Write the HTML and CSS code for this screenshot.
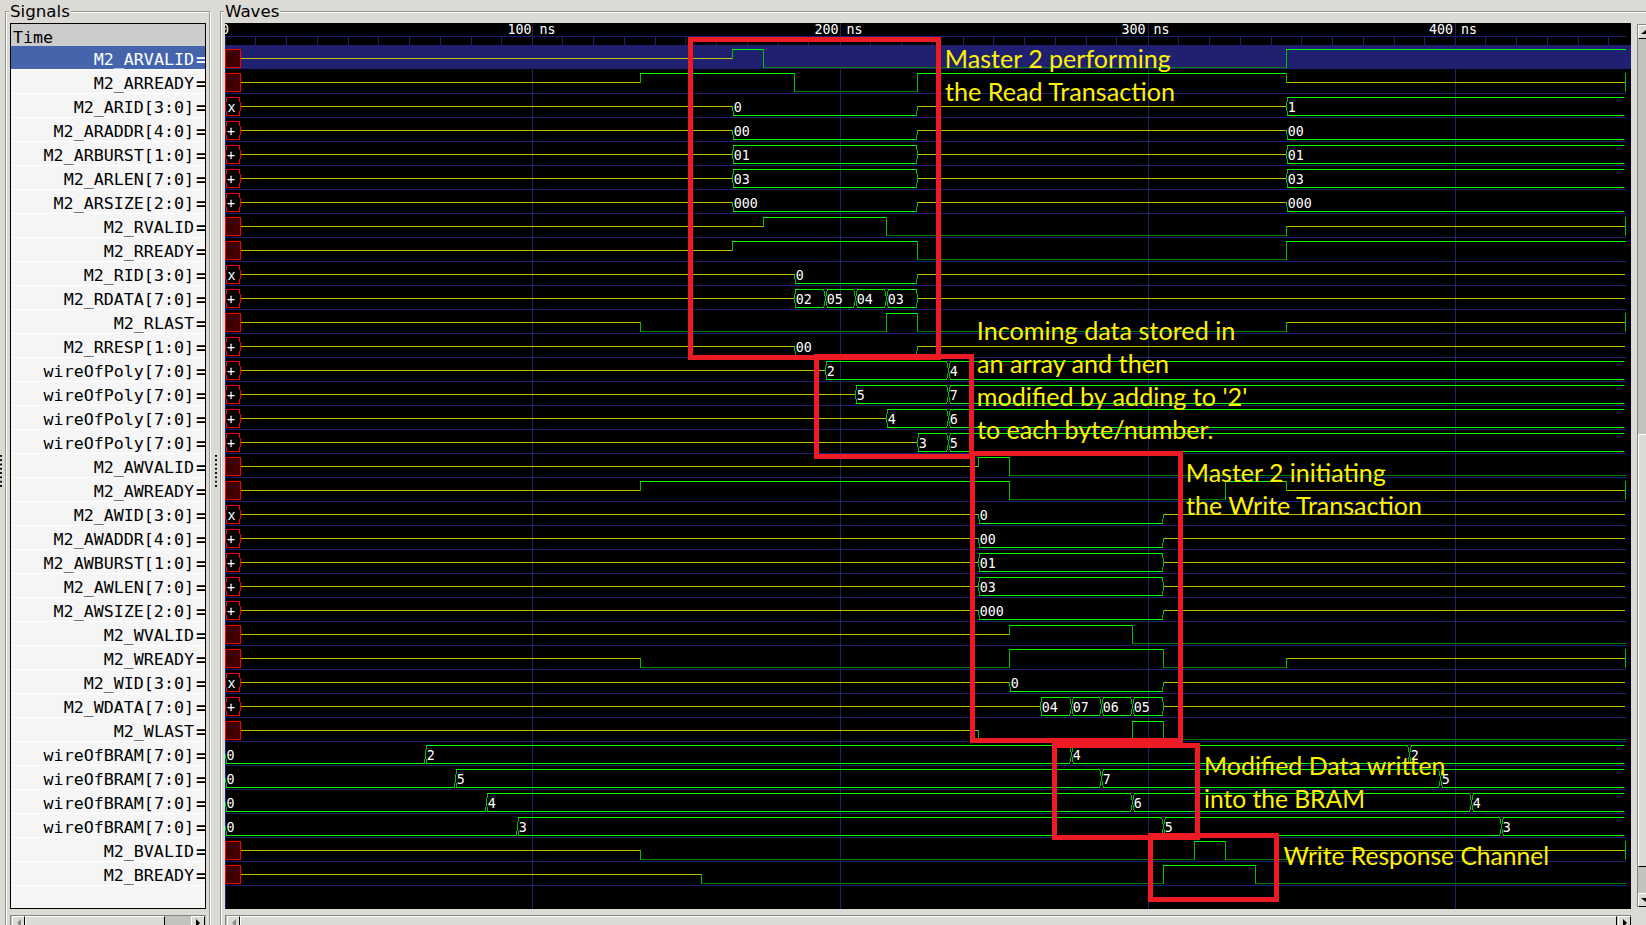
FILE: index.html
```
<!DOCTYPE html>
<html lang="en">
<head>
<meta charset="utf-8">
<title>Waveform viewer</title>
<link rel="stylesheet" href="styles.css">
</head>
<body>
<main class="viewer">
  <div class="grip"></div>
  <section class="pane signals">
    <h2 class="pane-title">Signals</h2>
    <div class="names">
      <div class="time">Time</div>
      <div id="names"></div>
    </div>
    <div class="hscroll">
      <span class="btn"><svg viewBox="0 0 12 12"><path d="M8 2v8L4 6z" fill="#8a8883"/></svg></span>
      <span class="thumb"></span>
      <span class="trough"></span>
      <span class="btn"><svg viewBox="0 0 12 12"><path d="M4 2v8l4-4z"/></svg></span>
    </div>
  </section>
  <div class="grip grip-mid"></div>
  <section class="pane waves">
    <h2 class="pane-title">Waves</h2>
    <div class="wave-row">
      <div class="wave-col">
        <svg id="waves" class="canvas" width="1406" height="886" viewBox="225 23 1406 886"></svg>
        <div class="hscroll">
          <span class="btn"><svg viewBox="0 0 12 12"><path d="M8 2v8L4 6z" fill="#8a8883"/></svg></span>
          <span class="thumb"></span>
          <span class="btn"><svg viewBox="0 0 12 12"><path d="M4 2v8l4-4z"/></svg></span>
        </div>
      </div>
      <div class="vscroll">
        <span class="vbtn"><svg viewBox="0 0 14 12"><path d="M2 8h10L7 4z"/></svg></span>
        <span class="vtrough"></span>
        <span class="vthumb"></span>
        <span class="vtrough-end"></span>
        <span class="vbtn"><svg viewBox="0 0 14 12"><path d="M2 4h10L7 8z"/></svg></span>
      </div>
    </div>
  </section>
</main>
<script src="app.js"></script>
</body>
</html>
```
FILE: styles.css
```
* { box-sizing: border-box; }
body {
  margin: 0;
  background: #dcdad5;
  color: #000;
  font-family: "DejaVu Sans", sans-serif;
  overflow: hidden;
}
.viewer {
  display: flex;
  height: 925px;
  padding-top: 11px;
  overflow: hidden;
}
.grip {
  width: 5px;
  flex: none;
  height: 34px;
  margin-top: 444px;
  background: radial-gradient(circle at 1px 1px, #000 1px, transparent 1.2px) 0 0 / 5px 4.3px;
}
.grip-mid {
  width: 10px;
  background: radial-gradient(circle at 6px 1px, #000 1px, transparent 1.2px) 0 0 / 10px 4.3px;
}
.pane {
  position: relative;
  flex: none;
  height: 940px;
  padding: 11px 4px 0;
  border: 1px solid #9a988f;
  box-shadow: 1px 1px #fff, inset 1px 1px #fff;
}
.signals { width: 205px; }
.waves { width: 1460px; }
.pane-title {
  position: absolute;
  left: 3px;
  top: -11px;
  margin: 0;
  padding: 0 1px;
  background: #dcdad5;
  font-size: 16.67px;
  font-weight: 400;
  line-height: 22px;
}
.names {
  width: 196px;
  height: 886px;
  border: 1px solid #000;
  background: #f5f5f5;
  overflow: hidden;
  font-family: "DejaVu Sans Mono", monospace;
  font-size: 16.67px;
}
.time {
  height: 22px;
  padding-left: 2px;
  background: #cbcbcb;
  line-height: 28px;
}
.name {
  display: flex;
  justify-content: flex-end;
  gap: 2px;
  height: 24px;
  margin-right: -1px;
  border-bottom: 1px solid #fff;
  line-height: 27px;
  white-space: pre;
}
.name b { width: 10px; line-height: 28px; }
.name.selected { background: #4464ac; color: #fff; }
.hscroll {
  display: flex;
  width: 196px;
  height: 16px;
  margin-top: 6px;
  padding-left: 1px;
  border-top: 1px solid #86847f;
  border-left: 1px solid #86847f;
  background: #c4c2bd;
}
.waves .hscroll { width: 1406px; }
.btn, .thumb {
  border-top: 1px solid #fff;
  border-left: 1px solid #fff;
  border-right: 1px solid #000;
  background: #dcdad5;
}
.btn { width: 13px; height: 15px; flex: none; }
.btn svg { display: block; width: 12px; height: 12px; }
.signals .thumb { width: 140px; }
.signals .trough { width: 26px; }
.signals .btn:last-child { width: 14px; }
.waves .thumb { flex: 1; margin-right: 1px; }
.wave-row { display: flex; gap: 6px; }
.wave-col { width: 1406px; flex: none; }
.canvas { display: block; background: #000; }
.vscroll {
  display: flex;
  flex-direction: column;
  width: 18px;
  height: 883px;
  margin-top: 1px;
  border-top: 1px solid #86847f;
  border-left: 1px solid #86847f;
  background: #c4c2bd;
}
.vbtn, .vthumb {
  flex: none;
  border-top: 1px solid #fff;
  border-left: 1px solid #fff;
  border-bottom: 1px solid #000;
  background: #dcdad5;
}
.vbtn { height: 14px; }
.vbtn svg { display: block; width: 14px; height: 12px; }
.vtrough { height: 395px; }
.vthumb { height: 433px; }
.vtrough-end { flex: 1; }
.canvas text { white-space: pre; }
.value {
  fill: #fff;
  font-family: "DejaVu Sans Mono", monospace;
  font-size: 13.33px;
}
.note {
  fill: #fff200;
  font-family: Lato, "Open Sans", sans-serif;
  font-size: 24.6px;
}
.frame { fill: none; stroke: #ed1c24; stroke-width: 5; shape-rendering: crispEdges; }
```
FILE: app.js
```
// Each signal: name, kind (bit / bus / ram), then [x, state] changes.
// Bit states: z, h, l. Bus states: z or the value text.
const ar = (v) => [[732, v], [917, 'z'], [1286, v]];
const aw = (v) => [[978, v], [1163, 'z']];
const signals = [
  ['M2_ARVALID', 'bit', [[732, 'h'], [763, 'l'], [1286, 'h']]],
  ['M2_ARREADY', 'bit', [[640, 'h'], [794, 'l'], [917, 'h'], [1286, 'z']]],
  ['M2_ARID[3:0]', 'x', [[732, '0'], [917, 'z'], [1286, '1']]],
  ['M2_ARADDR[4:0]', '+', ar('00')],
  ['M2_ARBURST[1:0]', '+', ar('01')],
  ['M2_ARLEN[7:0]', '+', ar('03')],
  ['M2_ARSIZE[2:0]', '+', ar('000')],
  ['M2_RVALID', 'bit', [[763, 'h'], [886, 'l'], [1286, 'z']]],
  ['M2_RREADY', 'bit', [[732, 'h'], [917, 'l'], [1286, 'h']]],
  ['M2_RID[3:0]', 'x', [[794, '0'], [917, 'z']]],
  ['M2_RDATA[7:0]', '+', [[794, '02'], [825, '05'], [855, '04'], [886, '03'], [917, 'z']]],
  ['M2_RLAST', 'bit', [[640, 'l'], [886, 'h'], [917, 'l'], [1286, 'z']]],
  ['M2_RRESP[1:0]', '+', [[794, '00'], [917, 'z']]],
  ['wireOfPoly[7:0]', '+', [[825, '2'], [948, '4']]],
  ['wireOfPoly[7:0]', '+', [[855, '5'], [948, '7']]],
  ['wireOfPoly[7:0]', '+', [[886, '4'], [948, '6']]],
  ['wireOfPoly[7:0]', '+', [[917, '3'], [948, '5']]],
  ['M2_AWVALID', 'bit', [[978, 'h'], [1009, 'l']]],
  ['M2_AWREADY', 'bit', [[640, 'h'], [1009, 'l'], [1225, 'h'], [1286, 'z']]],
  ['M2_AWID[3:0]', 'x', aw('0')],
  ['M2_AWADDR[4:0]', '+', aw('00')],
  ['M2_AWBURST[1:0]', '+', aw('01')],
  ['M2_AWLEN[7:0]', '+', aw('03')],
  ['M2_AWSIZE[2:0]', '+', aw('000')],
  ['M2_WVALID', 'bit', [[1009, 'h'], [1132, 'l']]],
  ['M2_WREADY', 'bit', [[640, 'l'], [1009, 'h'], [1163, 'l'], [1286, 'z']]],
  ['M2_WID[3:0]', 'x', [[1009, '0'], [1163, 'z']]],
  ['M2_WDATA[7:0]', '+', [[1040, '04'], [1071, '07'], [1101, '06'], [1132, '05'], [1163, 'z']]],
  ['M2_WLAST', 'bit', [[978, 'l'], [1132, 'h'], [1163, 'l']]],
  ['wireOfBRAM[7:0]', 'ram', [[425, '2'], [1071, '4'], [1409, '2']]],
  ['wireOfBRAM[7:0]', 'ram', [[455, '5'], [1101, '7'], [1440, '5']]],
  ['wireOfBRAM[7:0]', 'ram', [[486, '4'], [1132, '6'], [1471, '4']]],
  ['wireOfBRAM[7:0]', 'ram', [[517, '3'], [1163, '5'], [1501, '3']]],
  ['M2_BVALID', 'bit', [[640, 'l'], [1194, 'h'], [1225, 'l'], [1286, 'z']]],
  ['M2_BREADY', 'bit', [[701, 'l'], [1163, 'h'], [1255, 'l']]]
];

const BLUE = '#202070', HIGH = '#00ff00', EDGE = '#00c000', LOW = '#008000', MID = '#c0c000', RED = '#ff0000';
const out = [];
const rect = (x, y, w, h, c) => out.push(`<rect x="${x}" y="${y}" width="${w}" height="${h}" fill="${c}" shape-rendering="crispEdges"/>`);
const hline = (x0, x1, y, c) => rect(x0, y, x1 - x0, 1, c);
const vline = (x, y0, y1, c) => rect(x, y0, 1, y1 - y0 + 1, c);
const text = (x, y, s) => out.push(`<text class="value" x="${x}" y="${y}">${s}</text>`);

// Time ruler and grid
rect(225, 45, 1406, 24, BLUE);
hline(225, 1626, 36, BLUE);
vline(225, 36, 908, BLUE);
[255, 286, 317, 348, 378, 409, 440, 471, 501, 562, 593, 624, 655, 685, 716, 747, 778, 808,
 870, 901, 932, 963, 993, 1024, 1055, 1086, 1116, 1178, 1209, 1240, 1271, 1301, 1332, 1363,
 1394, 1424, 1485, 1516, 1547, 1578, 1608].forEach((x) => vline(x, 37, 44, BLUE));
[532, 840, 1148, 1455].forEach((x) => vline(x, 23, 908, BLUE));
text(221, 34, '0');
text(507.5, 34, '100 ns');
text(814.5, 34, '200 ns');
text(1121.5, 34, '300 ns');
text(1429, 34, '400 ns');

const isZero = (s) => /^0+$/.test(s);

// Slanted end of a bus segment; dir -1 closes a segment, 1 opens one.
function slant(x, y, dir, zero, wide, color) {
  if (wide) {
    if (!zero) { vline(x + 2 * dir, y, y + 1, color); vline(x + dir, y + 2, y + 6, color); vline(x, y + 7, y + 9, color); }
    vline(x, y + 9, y + 11, color); vline(x + dir, y + 12, y + 16, color); vline(x + 2 * dir, y + 17, y + 18, color);
  } else {
    if (!zero) { vline(x + dir, y, y + 4, color); vline(x, y + 5, y + 9, color); }
    vline(x, y + 9, y + 13, color); vline(x + dir, y + 14, y + 18, color);
  }
}

signals.forEach(([name, kind, changes], i) => {
  const y = 49 + 24 * i;
  if (i > 0) hline(225, 1626, y + 20, BLUE);
  if (kind === 'bit') {
    rect(225, y, 16, 19, RED);
    rect(226, y + 1, 14, 17, '#400000');
    const level = { h: y, z: y + 9, l: y + 18 };
    const color = { h: HIGH, z: MID, l: LOW };
    let x = 241, s = 'z';
    changes.forEach(([nx, ns]) => {
      hline(x, nx, level[s], color[s]);
      vline(nx, Math.min(level[s], level[ns]), Math.max(level[s], level[ns]), EDGE);
      x = nx + (ns === 'h' ? 0 : 1);
      s = ns;
    });
    hline(x, 1626, level[s], color[s]);
    if (s === 'z') vline(1625, y, y + 18, EDGE);
    return;
  }
  let x = 241, s = 'z';
  if (kind === 'ram') {
    x = 225; s = '0';
    slant(225, y, 1, true, false, EDGE);
    text(226.5, y + 15, '0');
  } else {
    hline(226, 240, y, RED);
    hline(226, 240, y + 18, RED);
    slant(225, y, 1, false, false, RED);
    slant(240, y, -1, false, false, RED);
    text(kind === 'x' ? 227.5 : 227, y + 15, kind);
  }
  const all = changes.concat([[1626, null]]);
  all.forEach(([nx, ns]) => {
    const cross = ns !== null && s !== 'z' && ns !== 'z' && !isZero(s);
    const inset = cross ? 2 : 1;
    if (s === 'z') {
      hline(x, ns === null ? 1625 : nx, y + 9, MID);
    } else {
      const from = x + 1, to = ns === null ? 1624 : nx - inset + 1;
      if (!isZero(s)) hline(from, to, y, HIGH);
      hline(from, to, y + 18, HIGH);
      if (ns !== null) slant(nx, y, -1, isZero(s), cross, EDGE);
    }
    if (ns !== null && ns !== 'z') {
      slant(nx, y, 1, isZero(ns), cross, EDGE);
      text(nx + 1.8, y + 15, ns);
    }
    x = ns === 'z' ? nx + 1 : nx + (cross ? 1 : 0);
    s = ns;
  });
});

// Highlight frames: left, top, right, bottom (outer edges)
[[688, 37, 941, 360], [814, 354, 974, 459], [970, 451, 1183, 743], [1052, 743, 1200, 840], [1148, 833, 1279, 902]]
  .forEach(([l, t, r, b]) => out.push(`<rect class="frame" x="${l + 2.5}" y="${t + 2.5}" width="${r - l - 5}" height="${b - t - 5}"/>`));

// Notes: x, baseline, width, text
[
  [944.8, 68, 226, 'Master 2 performing'],
  [945, 101, 230, 'the Read Transaction'],
  [976.8, 340, 258.5, 'Incoming data stored in'],
  [977, 373, 192, 'an array and then'],
  [976.8, 406, 270.5, "modified by adding to '2'"],
  [977, 439, 236.5, 'to each byte/number.'],
  [1185.8, 482, 200, 'Master 2 initiating'],
  [1186, 515, 236, 'the Write Transaction'],
  [1204, 775, 241.5, 'Modified Data written'],
  [1204, 808, 161, 'into the BRAM'],
  [1283.5, 865, 265.5, 'Write Response Channel']
].forEach(([x, y, w, s]) => out.push(`<text class="note" x="${x}" y="${y}" textLength="${w}" lengthAdjust="spacingAndGlyphs">${s}</text>`));

document.getElementById('waves').innerHTML = out.join('');
document.getElementById('names').innerHTML = signals
  .map(([name], i) => `<div class="name${i === 0 ? ' selected' : ''}"><span>${name}</span><b>=</b></div>`)
  .join('');
```
